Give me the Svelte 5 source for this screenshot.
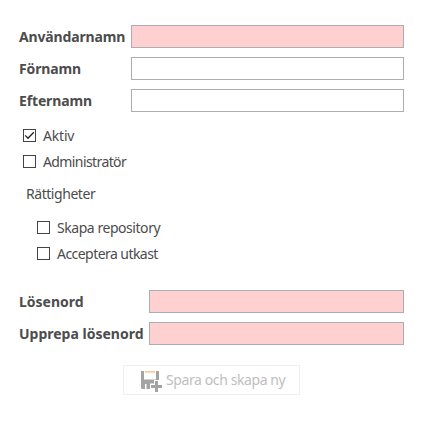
<script>
  let name = $state('');
  let first = $state('');
  let last = $state('');
  let pass = $state('');
  let repeat = $state('');
</script>

{#snippet check(label, checked, cls)}
  <label class="check">
    <span class="box">
      {#if checked}
        <svg width="11" height="11" viewBox="0 0 11 11"><path d="M1.2 5.4 L4 8.2 L9.8 2.2" fill="none" stroke="#222" stroke-width="1.3" /></svg>
      {/if}
    </span>
    <span class={cls}>{label}</span>
  </label>
{/snippet}

<form class="form">
  <div class="fields names">
    <label for="u"><span class="t-user">Användarnamn</span></label><input id="u" class="required" bind:value={name} />
    <label for="f"><span class="t-first">Förnamn</span></label><input id="f" bind:value={first} />
    <label for="l"><span class="t-last">Efternamn</span></label><input id="l" bind:value={last} />
  </div>
  <div class="checks">
    {@render check('Aktiv', true, 't-active')}
    {@render check('Administratör', false, 't-admin')}
  </div>
  <div class="heading"><span class="t-rights">Rättigheter</span></div>
  <div class="checks rights">
    {@render check('Skapa repository', false, 't-repo')}
    {@render check('Acceptera utkast', false, 't-draft')}
  </div>
  <div class="fields passwords">
    <label for="p"><span class="t-pass">Lösenord</span></label><input id="p" type="password" class="required" bind:value={pass} />
    <label for="r"><span class="t-repeat">Upprepa lösenord</span></label><input id="r" type="password" class="required" bind:value={repeat} />
  </div>
  <button type="button" disabled>
    <svg width="21" height="21" viewBox="0 0 21 21">
      <path d="M0 0H3V8.5H15V0H18V9H13V12.5H9V18H5.5V13H4V18H1L0 17Z" fill="#a3a3a3" />
      <path d="M4 0H14V1.7H4Z" fill="#ffc896" />
      <path d="M14 10H17V14H21V17H17V21H14V17H10V14H14Z" fill="#a3a3a3" />
    </svg>
    <span class="t-save">Spara och skapa ny</span>
  </button>
</form>

<style>
  :global(body) { background: #fff; }
  .form {
    box-sizing: border-box;
    width: 429px;
    height: 423px;
    padding: 25px 25px 0 19px;
    display: flex;
    flex-direction: column;
    font: 14px/20px "Noto Sans", "Open Sans", sans-serif;
    color: #4c4c4c;
    white-space: nowrap;
  }
  .fields {
    display: grid;
    row-gap: 9px;
    align-items: center;
    font-weight: 700;
  }
  .names { grid-template-columns: 112px 1fr; }
  .passwords { grid-template-columns: 130px 1fr; margin-top: 26px; }
  .fields label { height: 20px; }
  .t-user, .t-first, .t-last { letter-spacing: -0.15px; }
  .t-active { letter-spacing: -0.2px; }
  .t-admin { letter-spacing: -0.6px; }
  .t-rights, .t-repo { letter-spacing: -0.45px; }
  .t-draft { letter-spacing: -0.55px; }
  .t-save { letter-spacing: -0.4px; }
  input {
    box-sizing: border-box;
    min-width: 0;
    width: 100%;
    height: 23px;
    margin: 0;
    padding: 1px 4px;
    border: 1px solid #abadb3;
    border-radius: 0;
    background: #fff;
    outline: none;
    font: inherit;
  }
  input.required { background: #ffd0d0; }
  .checks {
    display: flex;
    flex-direction: column;
    gap: 6px;
    margin: 14px 0 0 4px;
  }
  .rights { margin: 14px 0 0 18px; }
  .check { display: flex; align-items: center; gap: 7px; height: 20px; }
  .box {
    box-sizing: border-box;
    width: 13px;
    height: 13px;
    margin-bottom: 1px;
    border: 1px solid #444;
    display: flex;
  }
  .heading { margin: 12px 0 0 7px; height: 20px; }
  button {
    box-sizing: border-box;
    align-self: flex-start;
    margin: 20px 0 0 104px;
    width: 177px;
    height: 30px;
    padding: 0 0 0 17px;
    border: 1px solid #eee;
    background: #fff;
    display: flex;
    align-items: center;
    gap: 4px;
    font: inherit;
    color: #bebebe;
  }
  button svg { flex: none; margin-top: 3px; }
</style>
